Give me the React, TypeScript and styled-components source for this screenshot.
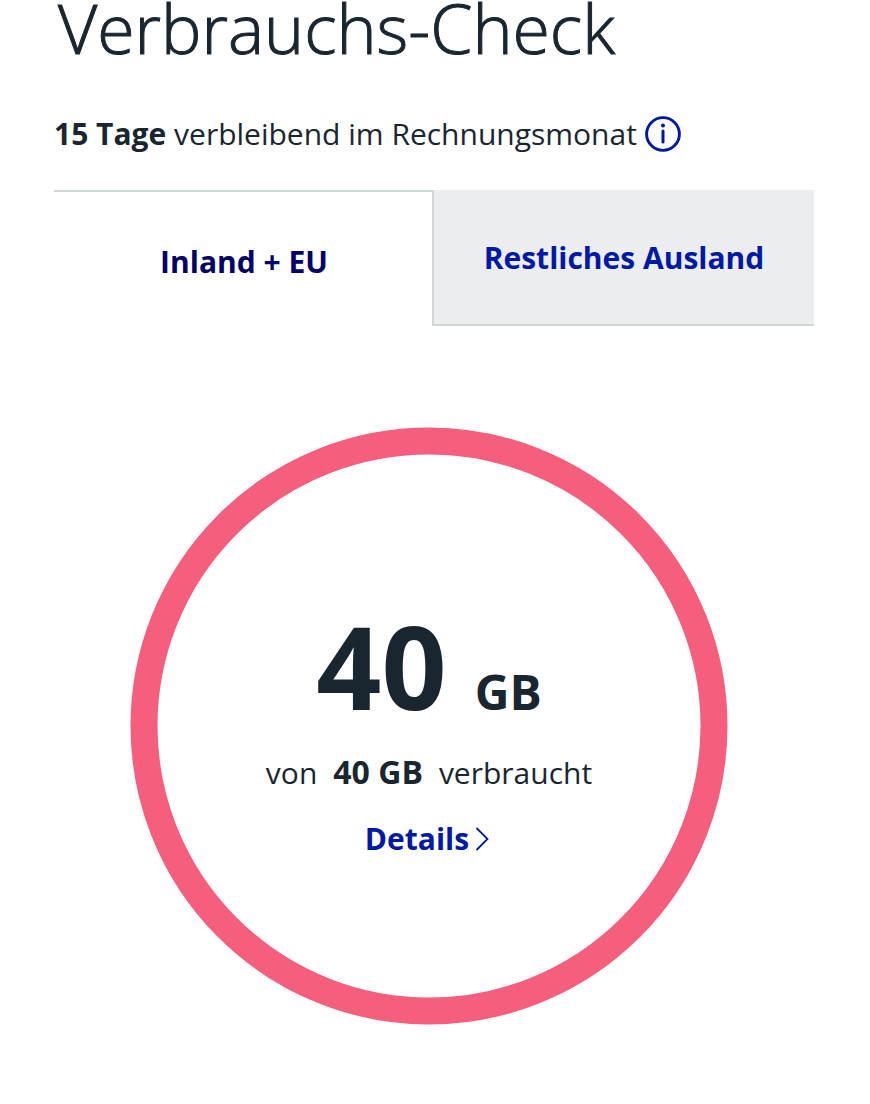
import React, { useState } from "react";
import styled, { createGlobalStyle } from "styled-components";

const GlobalStyle = createGlobalStyle`
  *, *::before, *::after { box-sizing: border-box; }
  body {
    margin: 0;
    background: #fff;
    color: #1a262f;
    font-family: "Open Sans", "Noto Sans", sans-serif;
    font-size: 30px;
    line-height: 40px;
  }
  button { font: inherit; border: 0; padding: 0; cursor: pointer; }
`;

const Page = styled.main`
  padding: 0 56px 80px 54px;
`;

const Title = styled.h1`
  margin: 0;
  padding-left: 4px;
  font-size: 68px;
  line-height: 56px;
  font-weight: 300;
  -webkit-text-stroke: 1px currentColor;
  white-space: nowrap;
`;

const Remaining = styled.div`
  display: flex;
  align-items: center;
  gap: 8px;
  margin-top: 56px;
  height: 44px;
  white-space: nowrap;
`;

const RemainingText = styled.p`
  margin: 0;
`;

const InfoButton = styled.button`
  display: flex;
  background: none;
  color: #0019a5;
`;

const TabList = styled.div`
  display: grid;
  grid-template-columns: 1fr 1fr;
  margin-top: 34px;
`;

const Tab = styled.button<{ $active: boolean }>`
  height: 136px;
  margin-left: ${(p) => (p.$active ? "0" : "-2px")};
  padding: ${(p) => (p.$active ? "6px 0 0" : "2px 0 0")};
  font-weight: 700;
  color: ${(p) => (p.$active ? "#000066" : "#0019a5")};
  background: ${(p) => (p.$active ? "#fff" : "#ecedef")};
  border-style: solid;
  border-color: #d1d6d8;
  border-width: ${(p) => (p.$active ? "2px 0 0" : "0 0 2px 2px")};
`;

const Usage = styled.section`
  display: grid;
  justify-items: center;
  align-items: center;
  margin-top: 101px;
  padding-right: 10px;
`;

const Ring = styled.svg`
  grid-area: 1 / 1;
  display: block;
  width: 100%;
  max-width: 598px;
`;

const Summary = styled.div`
  grid-area: 1 / 1;
  display: flex;
  flex-direction: column;
  align-items: center;
  padding-top: 16px;
  white-space: nowrap;
`;

const Amount = styled.p`
  display: flex;
  align-items: baseline;
  gap: 28px;
  margin: 0;
  font-size: 114px;
  line-height: 112px;
  font-weight: 700;
`;

const Unit = styled.span`
  font-size: 48px;
`;

const Quota = styled.p`
  display: flex;
  align-items: baseline;
  gap: 16px;
  margin: 4px 0 0;
`;

const QuotaTotal = styled.strong`
  font-size: 32px;
`;

const DetailsLink = styled.a`
  display: flex;
  align-items: center;
  gap: 6px;
  margin-top: 26px;
  font-weight: 700;
  color: #0019a5;
  text-decoration: none;
`;

const tabs = ["Inland + EU", "Restliches Ausland"];
const used = 40;
const total = 40;
const radius = 285;
const circumference = 2 * Math.PI * radius;

export default function App() {
  const [active, setActive] = useState(0);
  return (
    <>
      <GlobalStyle />
      <Page>
        <Title>Verbrauchs-Check</Title>
        <Remaining>
          <RemainingText>
            <strong>15 Tage</strong> verbleibend im Rechnungsmonat
          </RemainingText>
          <InfoButton type="button" aria-label="Information">
            <svg width="36" height="36" viewBox="0 0 36 36" fill="none">
              <circle cx="18" cy="18" r="16.4" stroke="currentColor" strokeWidth="2.9" />
              <circle cx="18" cy="9.6" r="2" fill="currentColor" />
              <path d="M18 15v11" stroke="currentColor" strokeWidth="3" strokeLinecap="round" />
            </svg>
          </InfoButton>
        </Remaining>
        <TabList role="tablist">
          {tabs.map((label, i) => (
            <Tab
              key={label}
              type="button"
              role="tab"
              aria-selected={i === active}
              $active={i === active}
              onClick={() => setActive(i)}
            >
              {label}
            </Tab>
          ))}
        </TabList>
        <Usage>
          <Ring viewBox="0 0 598 598" aria-hidden="true">
            <circle
              cx="299"
              cy="299"
              r={radius}
              fill="none"
              stroke="#f65e7d"
              strokeWidth="27"
              strokeDasharray={`${(circumference * used) / total} ${circumference}`}
              transform="rotate(-90 299 299)"
            />
          </Ring>
          <Summary>
            <Amount>
              {used}
              <Unit>GB</Unit>
            </Amount>
            <Quota>
              <span>von</span>
              <QuotaTotal>{total} GB</QuotaTotal>
              <span>verbraucht</span>
            </Quota>
            <DetailsLink href="#details">
              Details
              <svg width="18" height="24" viewBox="0 0 18 24" fill="none">
                <path d="M1.5 1L12.5 12L1.5 23" stroke="currentColor" strokeWidth="1.8" />
              </svg>
            </DetailsLink>
          </Summary>
        </Usage>
      </Page>
    </>
  );
}
